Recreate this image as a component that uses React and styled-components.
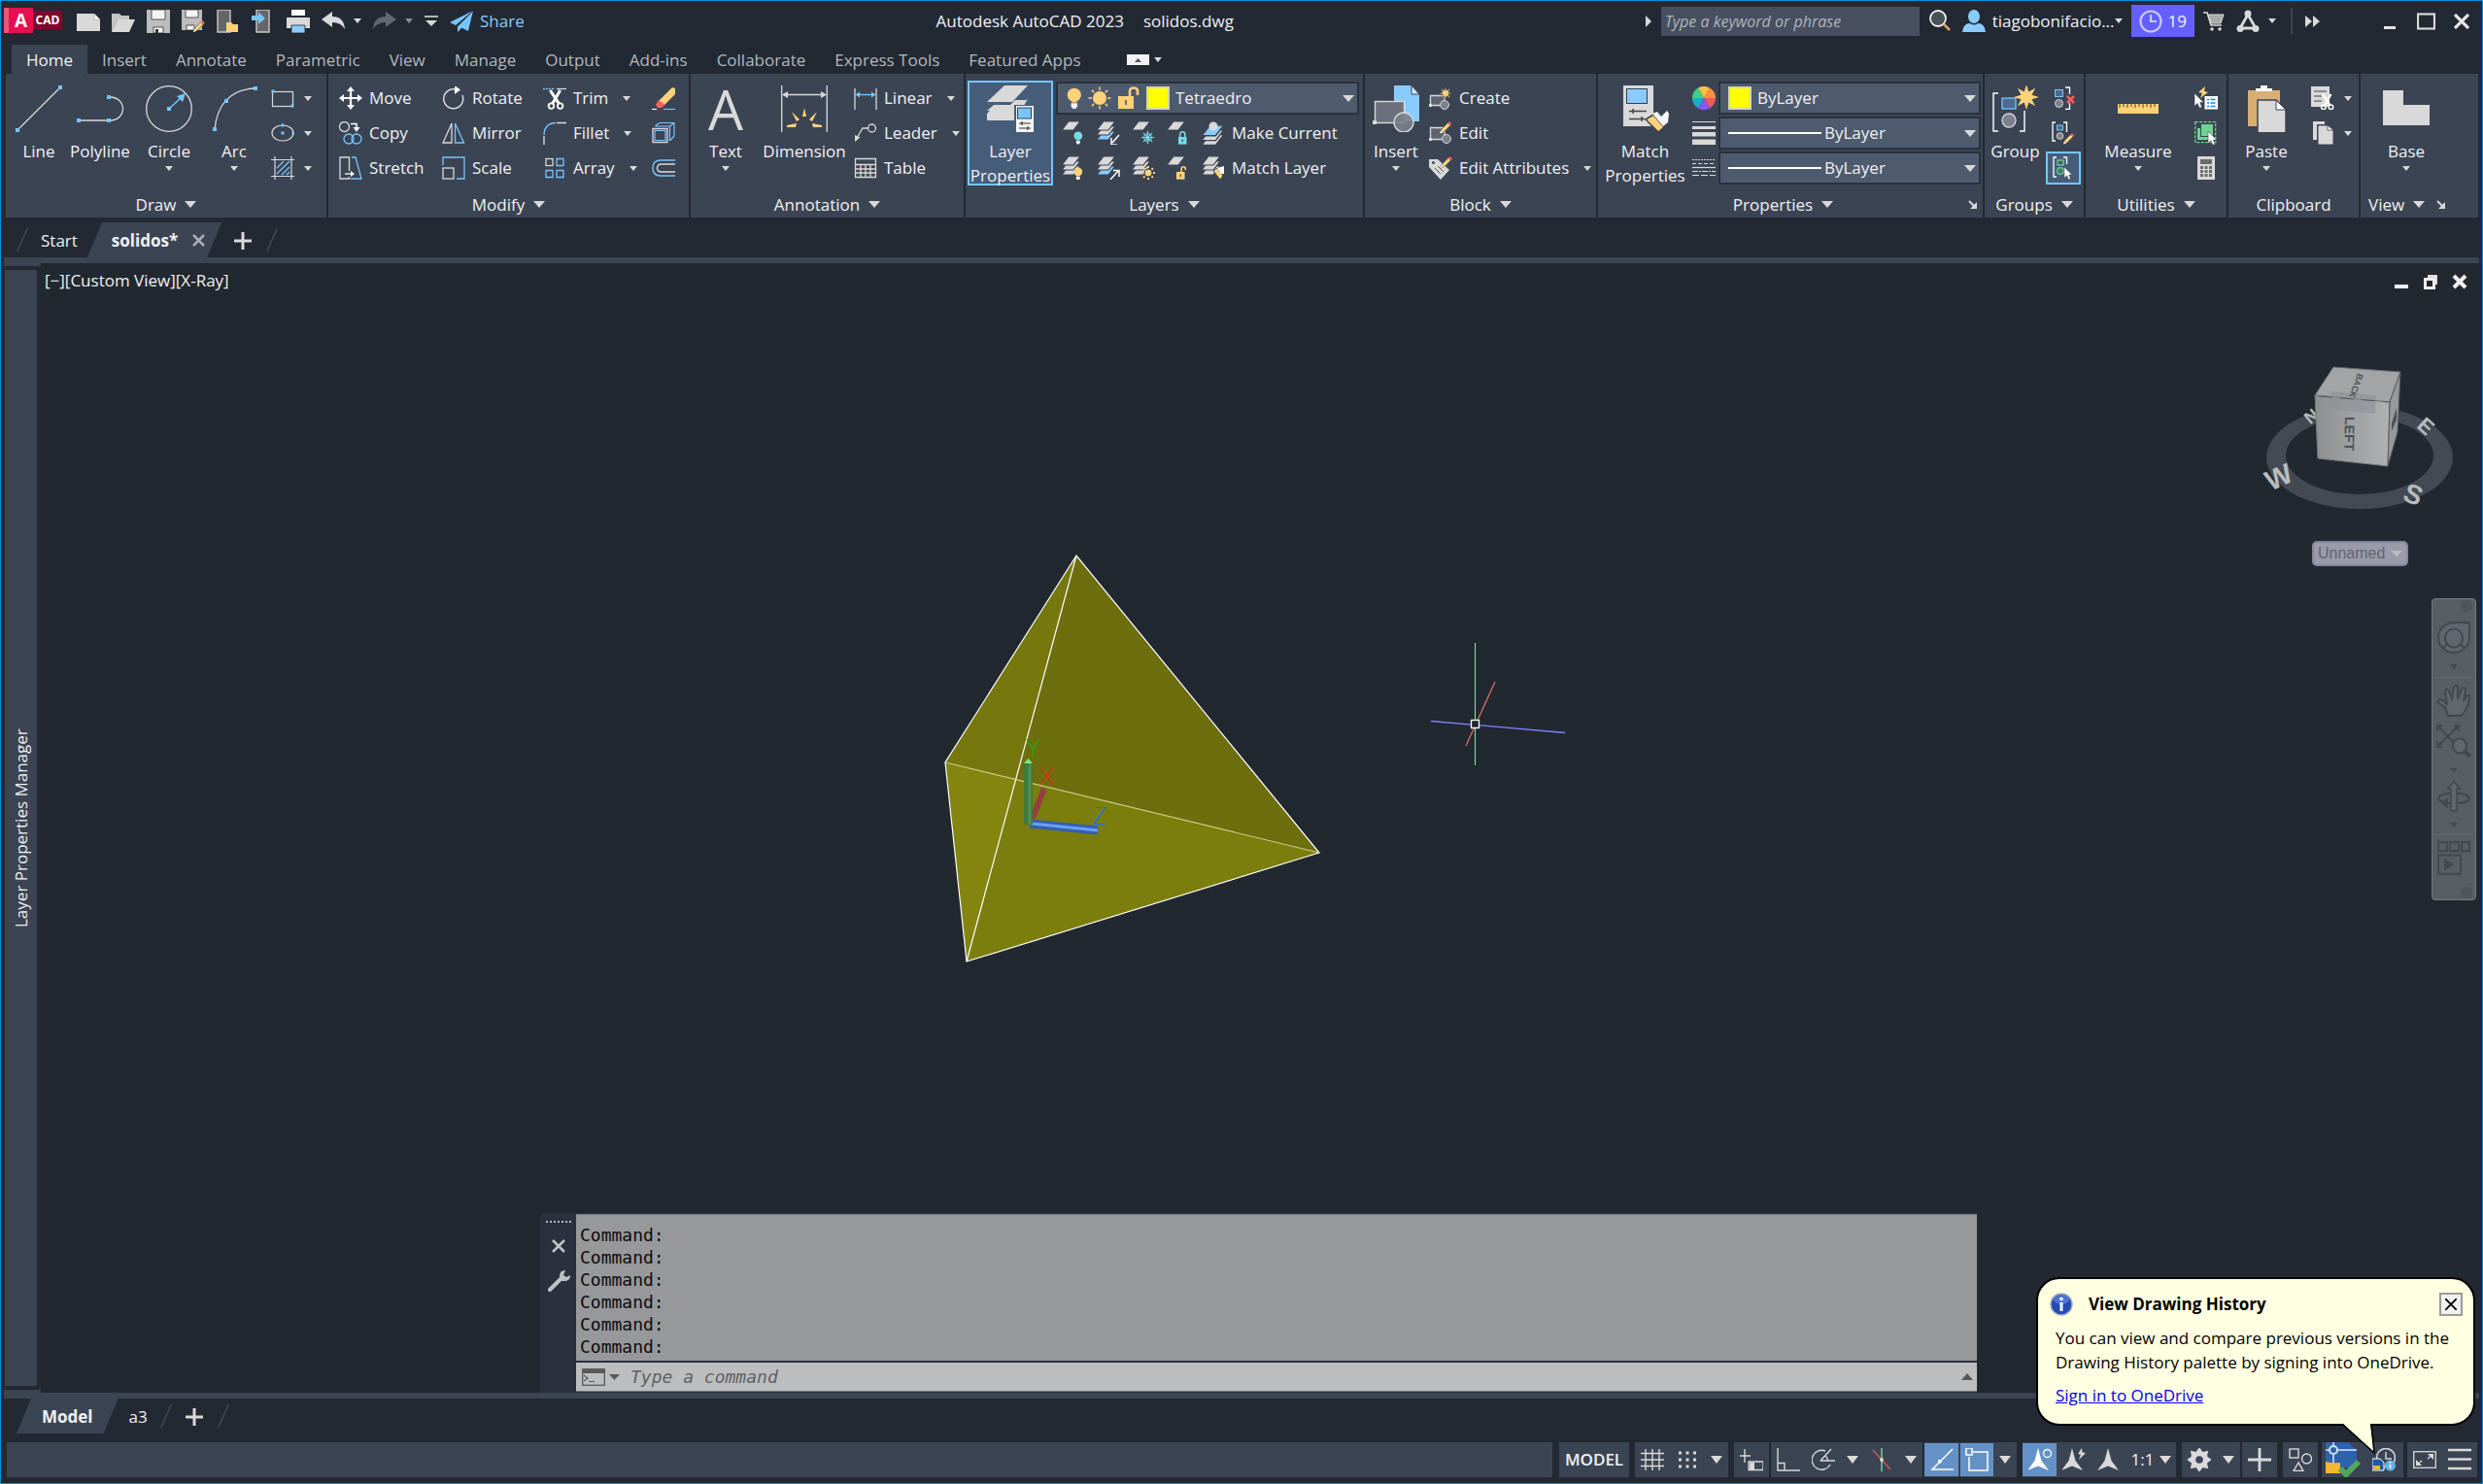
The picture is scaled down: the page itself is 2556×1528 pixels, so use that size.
import React from "react";
import styled, { createGlobalStyle, css } from "styled-components";

const c = {
  bg: "#222933",
  canvas: "#212830",
  panel: "#3b4453",
  field: "#4e5a6e",
  edge: "#2a323e",
  text: "#f0f1f3",
  dim: "#b4b8be",
  grey: "#d9d9d9",
  blue: "#76c5ff",
  sky: "#8acbff",
  gold: "#ffd27a",
  teal: "#76dbe6",
  red: "#f75f5f",
  green: "#6fd391",
  active: "#6592c6",
};
const sans = '"Open Sans", "Noto Sans", sans-serif';
const mono = '"DejaVu Sans Mono", "Liberation Mono", monospace';

const GlobalStyle = createGlobalStyle`
  * { box-sizing: border-box; }
  body { margin: 0; background: ${c.bg}; color: ${c.text}; font: 17px/24px ${sans}; }
  button, select, input { font: inherit; color: inherit; border: 0; background: none; padding: 0; margin: 0; border-radius: 0; }
  button { white-space: nowrap; }
  svg { display: block; flex: none; }
`;

/* ---------- drawing helpers ---------- */

const star = (cx, cy, R, r, n) => {
  let d = "";
  for (let i = 0; i < n * 2; i++) {
    const a = (Math.PI * i) / n - Math.PI / 2;
    const k = i % 2 ? r : R;
    d += `${i ? "L" : "M"}${(cx + k * Math.cos(a)).toFixed(1)} ${(cy + k * Math.sin(a)).toFixed(1)}`;
  }
  return d + "Z";
};

const Svg = ({ s = 24, w = s, h = s, box, children }) => (
  <svg width={w} height={h} viewBox={box || `0 0 ${w} ${h}`} preserveAspectRatio={box ? "none" : undefined} fill="none" aria-hidden="true">
    {children}
  </svg>
);
const Arrow = ({ w = 8, h = 5, fill = c.grey }) => (
  <Svg w={w} h={h}><path d={`M0 0H${w}L${w / 2} ${h}Z`} fill={fill} /></Svg>
);
const Dot = ({ x, y, s = 4 }) => <rect x={x - s / 2} y={y - s / 2} width={s} height={s} fill={c.blue} />;
const Cursor = ({ x, y, k = 1 }) => (
  <path transform={`translate(${x} ${y}) scale(${k})`} d="M0 0V14L3.300 11L5.500 16L8 15L6 10H10Z" fill="#fff" stroke={c.panel} strokeWidth=".6" />
);
const Pencil = ({ x, y, k = 1 }) => (
  <g transform={`translate(${x} ${y}) scale(${k})`}>
    <path d="M0 12L1.500 8L8 1.500L10.500 4L4 10.500Z" fill={c.gold} stroke={c.panel} strokeWidth=".6" />
    <path d="M8 1.500L9.500 0L12 2.500L10.500 4Z" fill={c.red} />
    <path d="M0 12L1 9L3 11Z" fill="#eee" />
  </g>
);
const Sheets = ({ fills, x = 0, y = 0, k = 1, gap = 5 }) => (
  <g transform={`translate(${x} ${y}) scale(${k})`}>
    {fills.map((f, i) => ({ f, i })).reverse().map(({ f, i }) => (
      <path key={i} d={`M7 ${i * gap}H19L12 ${i * gap + 9}H0Z`} fill={f} stroke={c.panel} strokeWidth="1.200" />
    ))}
  </g>
);
const Bulb = ({ x, y, fill, k = 1 }) => (
  <g transform={`translate(${x} ${y}) scale(${k})`}>
    <circle cx="6" cy="6" r="5.500" fill={fill} /><path d="M4 10H8V12H4Z" fill={fill} />
    <path d="M3.500 12.500H8.500V15L7 17H5L3.500 15Z" fill="#f2f2f2" />
  </g>
);
const Lock = ({ x, y, fill, open, k = 1 }) => (
  <g transform={`translate(${x} ${y}) scale(${k})`}>
    <rect x="0" y="7" width="10" height="9" fill={fill} />
    <path d={open ? "M6 7V3.500Q6 1 8.500 1T11 3.500V5" : "M2 7V4Q2 1 5 1T8 4V7"} stroke={fill} strokeWidth="1.800" />
    <path d="M5 10V13" stroke={c.panel} strokeWidth="1.500" />
  </g>
);
const Rays = ({ cx, cy, a, b, n = 8, w = 1.5, color = c.gold }) => (
  <path stroke={color} strokeWidth={w} d={Array.from({ length: n }, (_, i) => {
    const t = (Math.PI * 2 * i) / n;
    return `M${(cx + a * Math.cos(t)).toFixed(1)} ${(cy + a * Math.sin(t)).toFixed(1)}L${(cx + b * Math.cos(t)).toFixed(1)} ${(cy + b * Math.sin(t)).toFixed(1)}`;
  }).join("")} />
);
const Scissors = ({ x, y, k = 1 }) => (
  <g transform={`translate(${x} ${y}) scale(${k})`} stroke="#fff" strokeWidth="2">
    <path d="M2 0L10 12M11 0L4 12" strokeWidth="2.600" />
    <circle cx="3" cy="14" r="2.400" strokeWidth="1.600" /><circle cx="11" cy="14" r="2.400" strokeWidth="1.600" />
  </g>
);
const G = c.grey;

const icons = {
  line: <Svg s={48}><path d="M3 45L45 3" stroke={G} strokeWidth="1.300" /><Dot x={2} y={46} /><Dot x={46} y={2} /></Svg>,
  polyline: <Svg s={48}><path d="M2 36H34M34 12C52 12 52 36 34 36" stroke={G} strokeWidth="1.300" /><Dot x={2} y={36} /><Dot x={33} y={36} /><Dot x={33} y={12} /></Svg>,
  circle: <Svg s={48}><circle cx="24" cy="24" r="23.300" stroke={G} strokeWidth="1.300" /><path d="M24 24L37 12" stroke={c.blue} strokeWidth="1.500" /><path d="M41 8L32 11L38 17Z" fill={c.blue} /><Dot x={24} y={24} /></Svg>,
  arc: <Svg s={48}><path d="M4 46C6 20 20 4 45 3" stroke={G} strokeWidth="1.300" /><Dot x={4} y={45} /><Dot x={16} y={16} /><Dot x={46} y={3} /></Svg>,
  rect: <Svg><rect x="1.500" y="5.500" width="21" height="15" stroke={G} strokeWidth="1.200" /><Dot x={2} y={5} s={3} /><Dot x={22} y={20} s={3} /></Svg>,
  ellipse: <Svg><ellipse cx="12" cy="12" rx="11" ry="8" stroke={G} strokeWidth="1.200" /><Dot x={12} y={12} s={3} /><Dot x={12} y={4} s={3} /><Dot x={23} y={12} s={3} /></Svg>,
  hatch: <Svg><path d="M4 0V24M21 0V24M0 3.500H24M0 20.500H24" stroke={G} strokeWidth="1.200" /><path d="M6 12L13 5M6 18L19 5M11 19L19 11M16 19L19 16" stroke={c.blue} strokeWidth="1.300" /></Svg>,
  move: <Svg><path d="M12 2V22M2 12H22" stroke="#fff" strokeWidth="2.200" /><path d="M12 0L16 5H8ZM12 24L8 19H16ZM0 12L5 8V16ZM24 12L19 16V8Z" fill="#fff" /></Svg>,
  copy: <Svg><circle cx="5.500" cy="5.500" r="5" stroke={G} strokeWidth="1.300" /><path d="M12 2.500H18V7" stroke="#fff" strokeWidth="1.500" /><path d="M14.500 6H21.500L18 11Z" fill="#fff" /><circle cx="10" cy="18" r="5" stroke={c.blue} strokeWidth="1.300" /><circle cx="18" cy="18" r="5" stroke={c.blue} strokeWidth="1.300" /></Svg>,
  stretch: <Svg><path d="M10.500 15V1H1V23H10.500V21" stroke={G} strokeWidth="1.300" /><path d="M13 1H17L23 23H12" stroke={c.blue} strokeWidth="1.300" /><path d="M6 18H12" stroke="#fff" strokeWidth="1.300" /><path d="M12 15L16 18L12 21Z" fill="#fff" /></Svg>,
  rotate: <Svg><path d="M14 3A10 10 0 1 0 21 9" stroke={G} strokeWidth="1.500" /><path d="M13 -1L19 3.500L13 8Z" fill="#fff" /></Svg>,
  mirror: <Svg><path d="M10 2V22H1Z" stroke={G} strokeWidth="1.300" /><path d="M13.500 2V22H22.500Z" stroke={c.blue} strokeWidth="1.300" /></Svg>,
  scale: <Svg><path d="M1 9V1H23V23H15" stroke={c.blue} strokeWidth="1.300" /><rect x="1" y="12" width="11" height="11" stroke={G} strokeWidth="1.300" /></Svg>,
  trim: <Svg><path d="M0 2.500H11" stroke={c.blue} strokeWidth="1.300" strokeDasharray="2 1" /><path d="M14 2.500H24" stroke={G} strokeWidth="1.300" /><Scissors x={5} y={4} k={1.150} /></Svg>,
  fillet: <Svg><path d="M1 14C1 6 6 1.500 13 1.500" stroke={c.blue} strokeWidth="1.400" /><path d="M14 1.500H24M1 15V24" stroke={G} strokeWidth="1.400" /></Svg>,
  array: <Svg><rect x="3" y="2.500" width="7" height="7" stroke={G} strokeWidth="1.300" /><path d="M14 2.500H21V9.500H14ZM3 14.500H10V21.500H3ZM14 14.500H21V21.500H14Z" stroke={c.blue} strokeWidth="1.300" /></Svg>,
  erase: <Svg><path d="M21 1L24 2V8L13 19L7 15Z" fill={c.gold} /><path d="M7 14L14 19L10 22H6L4 19Z" fill={c.red} /><path d="M0 23.500H5" stroke="#fff" strokeWidth="1.200" /><path d="M12 23.500H24" stroke={c.blue} strokeWidth="1.200" /></Svg>,
  cube: <Svg><path d="M1 7.500H16V21.500H1Z" stroke={G} strokeWidth="1.300" /><path d="M3.500 4.500L8 1.500H23V15L18.500 20M3.500 5H18.500V20M18.500 5L23 1.500M3 9.500H14V19.500H3Z" stroke={c.blue} strokeWidth="1.200" /></Svg>,
  offset: <Svg><path d="M24 4H9Q1 4 1 12T9 20H24" stroke={c.blue} strokeWidth="1.400" /><path d="M24 8H10Q5.500 8 5.500 12T10 16H24" stroke={G} strokeWidth="1.400" /></Svg>,
  dimension: <Svg s={48}><path d="M.7 0V48M47.300 0V48" stroke={G} strokeWidth="1.300" /><path d="M3 9.500H45" stroke={G} strokeWidth="1.300" /><path d="M1 9.500L7 6V13ZM47 9.500L41 6V13Z" fill={G} /><path d="M22 32L24 23L26 32ZM19 35L11 27L16 37ZM29 35L37 27L32 37ZM16 39L6 41V43H15ZM32 39L42 41V43H33Z" fill={c.gold} /></Svg>,
  linear: <Svg><path d="M1 2V24M23 2V24" stroke={G} strokeWidth="1.300" /><path d="M3 8.500H21" stroke={c.blue} strokeWidth="1.400" /><path d="M1.500 8.500L6 5.500V11.500ZM22.500 8.500L18 11.500V5.500Z" fill={c.blue} /></Svg>,
  leader: <Svg><circle cx="18.500" cy="7" r="4" stroke={G} strokeWidth="1.300" /><path d="M14 7H9L3 17" stroke={G} strokeWidth="1.300" /><path d="M1 21L1 14L6.500 16.500Z" fill={G} /></Svg>,
  table: <Svg><path d="M1.500 2.500H22.500V21.500H1.500ZM1.500 8.500H22.500M1.500 13H22.500M1.500 17H22.500M7 8.500V21.500M12 8.500V21.500M17 8.500V21.500" stroke={G} strokeWidth="1.300" /></Svg>,
  layerProps: <Svg s={48}><path d="M14 22H28L42 14L29 36H0Z" fill={G} /><path d="M14 12H42L28 26H0Z" fill="#465d7a" /><path d="M13 15H40L28 26H0Z" fill={G} /><path d="M19 0H44L24 20H2Z" fill="#465d7a" /><path d="M18 0H42L26 17H0Z" fill={G} /><path d="M0 29L3 26H30V36H0Z" fill={G} /><rect x="28" y="20" width="22" height="29" fill="#465d7a" /><rect x="30" y="21" width="18" height="27" fill="#f5f5f5" /><rect x="31.500" y="23" width="14" height="11" fill={c.blue} stroke="#31404f" /><path d="M33 39H45M36 37V41M33 44H45M42 42V46" stroke="#333" strokeWidth="1.200" /></Svg>,
  layOff: <Svg><Sheets fills={[G]} /><Bulb x={12} y={10} k={0.8} fill={c.teal} /></Svg>,
  layIso: <Svg><Sheets fills={[G, G, c.sky]} /><path d="M23 14L16 22M15 17V24H21" stroke="#fff" strokeWidth="1.500" /></Svg>,
  layFreeze: <Svg><Sheets fills={[G]} /><circle cx="16.500" cy="16.500" r="4" stroke={c.teal} /><Rays cx={16.5} cy={16.5} a={0} b={6.5} w={1.2} color={c.teal} /></Svg>,
  layLock: <Svg><Sheets fills={[G]} /><Lock x={12} y={10} k={0.85} fill={c.teal} /></Svg>,
  makeCurrent: <Svg><g transform="translate(0 4)"><Sheets fills={[c.sky, G, G]} k={1.2} gap={4} /></g><circle cx="12" cy="5" r="4.500" fill={G} /></Svg>,
  layOn: <Svg><Sheets fills={[G, G, G]} /><Bulb x={12} y={11} k={0.8} fill={c.gold} /></Svg>,
  layUniso: <Svg><Sheets fills={[G, G, c.sky]} /><path d="M14 24L22 15M17 14.500H23V21" stroke="#fff" strokeWidth="1.500" /></Svg>,
  layThaw: <Svg><Sheets fills={[G, G, G]} /><circle cx="17" cy="17" r="4" fill={c.gold} stroke={c.panel} /><Rays cx={17} cy={17} a={5} b={7} w={2} /></Svg>,
  layUnlock: <Svg><Sheets fills={[G]} /><Lock x={10} y={10} k={0.85} fill={c.gold} open /></Svg>,
  matchLayer: <Svg><Sheets fills={[G, G, G]} /><path d="M12 15L16 12L22 20L19 24Z" fill={c.gold} stroke={c.panel} /><path d="M16 12L23 10L23 18L20 18Z" fill="#fff" /></Svg>,
  bulb: <Svg w={16}><Bulb x={0} y={1} k={1.3} fill={c.gold} /></Svg>,
  sun: <Svg><circle cx="12" cy="12" r="7" fill={c.gold} /><Rays cx={12} cy={12} a={8} b={11.5} w={1.5} /></Svg>,
  unlock: <Svg><rect x="1" y="10" width="16" height="13" fill={c.gold} /><path d="M13 10V5Q13 1.500 17 1.500T21 5V9" stroke={c.gold} strokeWidth="2.600" /><path d="M9 14V19" stroke={c.field} strokeWidth="1.600" /></Svg>,
  insert: <Svg s={48}><path d="M22 0H40L48 9V37H22Z" fill={c.sky} /><path d="M40 0L48 9H40Z" fill="#d4ecff" stroke={c.panel} /><rect x="2.500" y="16.500" width="30" height="22" fill="#6b707c" stroke={G} strokeWidth="1.400" /><circle cx="32" cy="38" r="10" fill="#7c818c" fillOpacity=".9" stroke={G} strokeWidth="1.400" /><rect x="0" y="36" width="4" height="4" fill={G} /></Svg>,
  create: <Svg><path d="M1.500 9.500H16V19.500H1.500Z" fill="#5d636f" stroke={G} strokeWidth="1.300" /><path d={star(17, 7, 7, 3, 8)} fill={c.gold} stroke={c.panel} strokeWidth=".6" /><circle cx="16" cy="19" r="4.500" fill="#7c818c" stroke={G} /><rect y="18" width="3" height="3" fill={G} /></Svg>,
  edit: <Svg><path d="M1.500 6.500H16V18.500H1.500Z" fill="#5d636f" stroke={G} strokeWidth="1.300" /><circle cx="18" cy="18" r="4.500" fill="#7c818c" stroke={G} /><Pencil x={11} y={0} k={1.05} /><rect y="17" width="3" height="3" fill={G} /></Svg>,
  editAttr: <Svg><path d="M0 3H9L21 14L12 24L0 11Z" fill={G} /><circle cx="4.500" cy="6.500" r="1.500" fill={c.panel} /><path d="M6 12L12 18M9 10L15 16" stroke="#555" /><Pencil x={12} y={0} k={1} /></Svg>,
  matchProps: <Svg s={48}><rect x="1" y="0" width="31" height="42" fill={G} /><rect x="4.500" y="3.500" width="21" height="15" fill={c.sky} stroke="#31404f" /><path d="M7 26.500H25M11 24V29M7 34.500H23M20 32V37" stroke="#444" strokeWidth="1.500" /><path d="M24 35L32 30L43 43L37 48Z" fill={c.gold} stroke={c.panel} strokeWidth="1.500" /><path d="M31 29L36 27L40 32L46 26L48 29L47 38L42 42Z" fill="#f5f5f5" /></Svg>,
  wheel: <Svg>{["#ffc048", "#ff9040", "#e85a60", "#8658f5", "#18aecb", "#40cf86"].map((f, i) => {
    const p = (k) => `${(12 + 12 * Math.sin((k * Math.PI) / 3)).toFixed(1)} ${(12 - 12 * Math.cos((k * Math.PI) / 3)).toFixed(1)}`;
    return <path key={f} d={`M12 12L${p(i - 0.5)}A12 12 0 0 1 ${p(i + 0.5)}Z`} fill={f} />;
  })}</Svg>,
  weights: <Svg><path d="M0 0H24V1H0ZM0 5H24V8H0ZM0 11H24V15.500H0ZM0 18.500H24V24H0Z" fill={G} /></Svg>,
  dashes: <Svg><g stroke={G} strokeWidth="1.200"><path d="M0 3.500H24" strokeDasharray="2 1" /><path d="M0 7.500H24" strokeDasharray="4 2" /><path d="M0 11.500H24" /><path d="M0 15.500H24" strokeDasharray="6 1 2 1" /><path d="M0 19.500H24" strokeDasharray="7 2" /></g></Svg>,
  group: <Svg s={48}><path d="M6 8H1V47H6M28 47H33V26" stroke="#fff" strokeWidth="1.400" /><rect x="10" y="13" width="14" height="11" fill="#4a6d8f" stroke={c.blue} strokeWidth="1.300" /><circle cx="17" cy="36" r="7" fill="#7c818c" stroke={G} strokeWidth="1.300" /><path d={star(35, 12, 13, 6, 8)} fill={c.gold} /></Svg>,
  ungroup: <Svg><path d="M14 1H18.500V8M18.500 17V23.500H14" stroke="#fff" strokeWidth="1.300" /><rect x="3.500" y="3.500" width="8" height="7" fill="#4a6d8f" stroke={c.blue} /><circle cx="7.500" cy="17.500" r="4" fill="#7c818c" stroke={G} /><path d="M16 10L23 17M23 10L16 17" stroke={c.red} strokeWidth="2.600" /></Svg>,
  groupEdit: <Svg><path d="M4 1H1V20H4M12 1H15.500V11" stroke="#fff" strokeWidth="1.300" /><rect x="5.500" y="4" width="6" height="5" fill="#4a6d8f" stroke={c.blue} /><circle cx="8.500" cy="15" r="3.300" fill="#7c818c" stroke={G} /><Pencil x={12} y={12} k={0.95} /></Svg>,
  groupSel: <Svg><path d="M5 1H2V21H5M12 1H15.500V8" stroke="#fff" strokeWidth="1.300" /><rect x="6" y="4" width="6" height="5" stroke={c.green} strokeWidth="1.300" /><circle cx="9" cy="15" r="3.300" fill="#3f7a64" stroke={c.green} strokeWidth="1.300" /><Cursor x={13} y={11} k={0.8} /></Svg>,
  ruler: <Svg s={48}><rect x="3" y="19" width="42" height="10" fill={c.gold} /><path d="M5 19V23M9 19V22M13 19V23M17 19V22M21 19V23M25 19V22M29 19V23M33 19V22M37 19V23M41 19V22" stroke="#6c5a33" strokeWidth="1.200" /></Svg>,
  quick: <Svg><rect x="10.500" y="10" width="13.500" height="13.500" fill="#fff" /><path d="M13 13.500H15M13 17H15M13 20.500H15M16.500 13.500H21.500M16.500 17H21.500M16.500 20.500H21.500" stroke="#1787e0" strokeWidth="1.400" /><path d="M11 0L4 6L8 7L6 12L14 6L10 5Z" fill={c.gold} /><Cursor x={0} y={7} k={0.95} /></Svg>,
  selAll: <Svg><rect x=".7" y=".7" width="21" height="21" stroke={c.green} strokeWidth="1.300" strokeDasharray="3 1.500" /><path d="M3 7H6V16H14V19H3Z" fill={c.green} /><rect x="7" y="3" width="12" height="12" fill={c.green} /><Cursor x={14} y={10} k={0.9} /></Svg>,
  calc: <Svg><rect x="3" y="0" width="18" height="24" fill={G} /><path d="M6 3H18V8H6ZM6 10H9V13H6ZM10.500 10H13.500V13H10.500ZM15 10H18V13H15ZM6 14H9V17H6ZM10.500 14H13.500V17H10.500ZM15 14H18V17H15ZM6 18H9V21H6ZM10.500 18H13.500V21H10.500ZM15 18H18V21H15Z" fill="#6b6b6b" /></Svg>,
  paste: <Svg s={48}><path d="M5 5H38V42H5Z" fill="#d9ae74" /><path d="M13 6V3H18V0H25V3H30V6Z" fill="#fff" /><path d="M15 15H34L44 25V49H15Z" fill={G} stroke={c.panel} strokeWidth="1.500" /><path d="M34 15V25H44Z" fill="#fff" stroke={c.panel} /></Svg>,
  cut: <Svg><path d="M0 0H19V21H0Z" fill={G} /><path d="M3 5H16M3 10H11M3 15H11" stroke="#444" strokeWidth="1.200" /><Scissors x={10} y={8} k={0.95} /></Svg>,
  copyClip: <Svg><path d="M2 0H14V3H6V19H2Z" fill={G} /><path d="M7 4H17L23 9V24H7Z" fill={G} stroke={c.panel} /><path d="M17 4V9H23Z" fill="#fff" stroke={c.panel} strokeWidth=".8" /></Svg>,
  base: <Svg s={48}><path d="M0 5H21V20H48V41H0Z" fill={G} /></Svg>,

  newFile: <Svg><path d="M0 4H18L24 10V22H0Z" fill={G} /><path d="M18 4V10H24Z" fill="#fff" stroke="#999" strokeWidth=".6" /></Svg>,
  open: <Svg><path d="M0 23V4H8L10 6H18V10H6Z" fill="#c4c4c4" /><path d="M6 10H24L18 23H0Z" fill={G} /></Svg>,
  save: <Svg><path d="M0 0H24V24H0Z" fill="#bdbdbd" /><path d="M5 0H19V10H5ZM7 18H17V24H7Z" fill="#f4f4f4" stroke="#333" strokeWidth=".8" /><path d="M9 20H12V24H9Z" fill="#333" /></Svg>,
  saveAs: <Svg><path d="M0 0H21V21H0Z" fill="#bdbdbd" /><path d="M4 0H17V8H4ZM5 16H13V21H5Z" fill="#f4f4f4" stroke="#333" strokeWidth=".8" /><Pencil x={12} y={11} k={1} /></Svg>,
  openWeb: <Svg><path d="M1 0H14V23H1Z" fill="#666" stroke="#c9c9c9" strokeWidth="1.400" /><path d="M10 13H15L17 15H22V23H10Z" fill={c.gold} /></Svg>,
  saveWeb: <Svg><path d="M5 0H18V23H5Z" fill="#666" stroke="#c9c9c9" strokeWidth="1.400" /><path d="M0 6H7V2L14 9L7 15V11H0Z" fill={c.blue} /></Svg>,
  print: <Svg><path d="M5 0H19V6H5Z" fill="#fff" /><path d="M0 8H24V19H0Z" fill={G} /><path d="M5 16H19V24H5Z" fill={c.sky} stroke="#222" strokeWidth=".8" /></Svg>,
  undo: <Svg><path d="M0 10L11 2V7Q23 7 24 20Q20 13 11 13V18Z" fill={G} /></Svg>,
  redo: <Svg><path d="M24 10L13 2V7Q1 7 0 20Q4 13 13 13V18Z" fill="#626870" /></Svg>,
  custom: <Svg w={14} h={12}><path d="M0 1H14" stroke={G} strokeWidth="1.600" /><path d="M1 5H13L7 11Z" fill={G} /></Svg>,
  plane: <Svg><path d="M24 1L0 13L6 16ZM24 1L9 17L19 22ZM24 1L8 17V23L12 19Z" fill={c.blue} /><path d="M24 1L8 17" stroke={c.bg} /></Svg>,
  search: <Svg><circle cx="10" cy="9" r="8" fill="#4a5058" stroke="#eee" strokeWidth="1.800" /><path d="M16 15L22 21" stroke="#d9a066" strokeWidth="2.600" /></Svg>,
  user: <Svg><ellipse cx="12" cy="7" rx="6" ry="7" fill={c.sky} /><path d="M0 23Q1 14 8 14Q12 17 16 14Q23 14 24 23Z" fill={c.sky} /></Svg>,
  clock: <Svg><circle cx="12" cy="12" r="10.500" stroke="#c9c8ff" strokeWidth="2.200" /><path d="M12 5V12H18" stroke="#c9c8ff" strokeWidth="2.200" /></Svg>,
  cart: <Svg><path d="M0 3H4L8 16H19" stroke={G} strokeWidth="1.500" /><path d="M5 5H21L18 14H8Z" fill="#aaa" stroke={G} /><circle cx="9" cy="20" r="1.800" fill={G} /><circle cx="17" cy="20" r="1.800" fill={G} /></Svg>,
  a360: <Svg><path d="M12 5L4 19H20Z" stroke={G} strokeWidth="2.800" strokeLinejoin="round" /><circle cx="12" cy="4" r="3.500" fill={G} /><circle cx="4" cy="19.500" r="3.500" fill={G} /><circle cx="20" cy="19.500" r="3.500" fill={G} /></Svg>,
  more: <Svg w={16} h={12}><path d="M0 0L7 6L0 12ZM8 0L15 6L8 12Z" fill={G} /></Svg>,

  grid: <Svg><path d="M5 1V23M12 1V23M19 1V23M0 5.500H24M0 12H24M0 18.500H24" stroke={G} strokeWidth="1.400" /></Svg>,
  dots: <Svg><path d="M3 5H21M3 12H21M3 19H21" stroke={G} strokeWidth="3" strokeDasharray="3 4.500" /></Svg>,
  dyn: <Svg><path d="M5 1V15M0 8H11" stroke={G} strokeWidth="1.400" /><path d="M9 14H24V22.500H9Z" fill={c.panel} stroke={G} strokeWidth="1.300" /><path d="M10 15H15V22H10Z" fill={G} /></Svg>,
  ortho: <Svg><path d="M1 0V23H24M1 15.500H8V23" stroke={G} strokeWidth="1.400" /></Svg>,
  polar: <Svg><path d="M14 3A10 10 0 1 0 19 17M9 13H24M9 13L20 1M14 8Q17 10 16 13" stroke={G} strokeWidth="1.400" /></Svg>,
  iso: <Svg><path d="M12 0V24" stroke={c.green} strokeWidth="1.500" /><path d="M3 2L21 22" stroke="#d9535b" strokeWidth="1.400" /><rect x="10.500" y="10.500" width="3" height="3" fill="#fff" /></Svg>,
  track: <Svg><path d="M23 1L2 22H24" stroke="#fff" strokeWidth="1.500" /><rect x="8" y="12" width="3.500" height="3.500" fill="#fff" /></Svg>,
  osnap: <Svg><path d="M8 4H23V23H4V9" stroke="#fff" strokeWidth="1.500" /><path d="M1 0H7V7H1Z" stroke="#fff" strokeWidth="1.500" /></Svg>,
  annoVis: <Svg><path d="M10 0L13.500 13L21 23L10 18.500L-1 23L6.500 13Z" fill="#fff" /><circle cx="19.500" cy="5.500" r="4" stroke="#fff" strokeWidth="1.300" /></Svg>,
  annoAuto: <Svg><path d="M10 0L13.500 13L21 23L10 18.500L-1 23L6.500 13Z" fill={G} /><path d="M20 0L16 6L19 6.500L17 12L24 5L20.500 4.500Z" fill={G} /></Svg>,
  anno: <Svg><path d="M11 0L14.500 13L22 23L11 18.500L0 23L7.500 13Z" fill={G} /></Svg>,
  gear: <Svg><path d={star(12, 12, 13, 8.5, 8)} fill={G} /><circle cx="12" cy="12" r="9" fill={G} /><circle cx="12" cy="12" r="3.800" fill={c.panel} /></Svg>,
  plus: <Svg><path d="M12 0V24M0 12H24" stroke={G} strokeWidth="2.800" /></Svg>,
  shapes: <Svg><rect x="1" y="1" width="9" height="9" stroke={G} strokeWidth="1.400" /><circle cx="18.500" cy="11" r="5" stroke={G} strokeWidth="1.400" /><path d="M10 15L5 23.500H15Z" stroke={G} strokeWidth="1.400" /></Svg>,
  sheetSet: <Svg w={36} h={36}><path d="M0 0H24L32 9V26H0Z" fill="#2d62ad" /><path d="M8 0V22M0 8H32" stroke="#a9c9ee" strokeWidth="2" /><circle cx="8" cy="8" r="4" fill="#2d62ad" stroke="#cfe3fa" strokeWidth="2" /><path d="M0 20Q8 22 15 21V32H0Z" fill="#f5b72e" /><path d="M15 27L21 33L34 20" stroke="#4fa85a" strokeWidth="6" /></Svg>,
  history: <Svg><circle cx="14" cy="10" r="9.500" stroke={G} strokeWidth="1.600" /><path d="M14 4V11H20" stroke={G} strokeWidth="1.400" /><path d="M0 11H8L12 15V23H0Z" fill="#2057a5" stroke="#fff" /><path d="M1 18H8V22H1Z" fill="#f5b72e" /><circle cx="18.500" cy="18" r="5.500" fill="#62b0ea" /><path d="M18.500 17V21M18.500 14V15.500" stroke="#fff" strokeWidth="1.600" /></Svg>,
  clean: <Svg><rect x=".7" y="3.700" width="22.600" height="16.600" stroke={G} strokeWidth="1.300" /><path d="M3 12V18H9ZM21 12V6H15Z" fill={G} /><path d="M4 17L9 13M20 7L15 11" stroke={G} strokeWidth="1.300" /></Svg>,
  menu: <Svg><path d="M0 2H24M0 11.500H24M0 21H24" stroke={G} strokeWidth="2.600" /></Svg>,
};

/* ---------- shell ---------- */

const Shell = styled.div`
  position: relative; display: flex; flex-direction: column; min-height: 100vh;
  border: 1px solid #0091dc; background: ${c.bg}; overflow: hidden;
`;
const Row = styled.div`display: flex; align-items: center; gap: ${(p) => p.$gap || 0}px; padding-left: ${(p) => p.$pad || 0}px;`;
const Grow = styled.div`flex: 1;`;

const IconButton = styled.button`
  display: flex; align-items: center; justify-content: center; flex: none;
  width: ${(p) => p.$w || 24}px; height: ${(p) => p.$h || 24}px;
`;

/* title bar */
const TitleBar = styled.header`display: flex; align-items: center; justify-content: space-between; height: 45px; padding: 0 12px 4px 3px;`;
const TitleSide = styled.div`display: flex; align-items: center; flex: none;`;
const Logo = styled.button`display: flex; align-items: flex-start; height: 28px; margin-right: 15px;`;
const LogoA = styled.span`
  width: 30px; height: 26px; background: #e51050; border-left: 5px solid #f0527f;
  color: #fff; font: 700 19px/26px ${sans};
`;
const LogoCad = styled.span`
  width: 30px; height: 19px; margin-top: 3px; background: #7c0a2c; color: #fff; font: 700 12px/19px ${sans};
`;
const Quick = styled.div`display: flex; align-items: center; gap: 12px;`;
const QuickPair = styled.div`display: flex; align-items: center; gap: 9px;`;
const Share = styled.button`display: flex; align-items: center; gap: 7px; color: ${c.sky}; margin-left: 12px;`;
const AppTitle = styled.h1`display: flex; gap: 20px; margin: 0; font: 400 17px/24px ${sans};`;
const SearchBox = styled.input`
  width: 266px; height: 30px; margin: 0 9px 0 10px; padding: 0 4px; background: #474f60; font-style: italic; font-size: 16px;
  &::placeholder { color: #b0b4bc; opacity: 1; }
`;
const Account = styled.button`display: flex; align-items: center; gap: 7px; margin-left: 11px;`;
const Trial = styled.button`
  display: flex; align-items: center; gap: 6px; height: 33px; padding: 0 8px 0 8px; margin: 0 9px; background: #6360ff;
`;
const Rule = styled.div`width: 2px; height: 27px; background: ${c.panel}; margin: 0 13px 0 15px;`;
const WindowButtons = styled.div`display: flex; gap: 18px; margin-left: 62px;`;

/* ribbon tabs */
const Tabs = styled.nav`display: flex; align-items: stretch; height: 30px; padding-left: 11px;`;
const Tab = styled.button`
  padding: 1px 15px 0; color: ${(p) => (p.$on ? c.text : c.dim)};
  background: ${(p) => (p.$on ? c.panel : "none")};
`;
const TabToggle = styled.button`display: flex; align-items: center; gap: 5px; margin-left: 32px;`;

/* ribbon */
const Ribbon = styled.section`display: flex; height: 148px; margin: 0 4px 0 5px; background: ${c.panel};`;
const Panel = styled.div`
  display: flex; flex-direction: column; width: ${(p) => p.$w}px; flex: ${(p) => (p.$w ? "none" : "1")};
  border-right: ${(p) => (p.$w ? `2px solid ${c.bg}` : "0")};
`;
const PanelBody = styled.div`display: flex; align-items: flex-start; height: 121px; padding: 7px 0 0 ${(p) => p.$pad || 0}px;`;
const PanelFoot = styled.div`display: flex; align-items: center; height: 27px;`;
const PanelTitle = styled.button`
  display: flex; align-items: center; justify-content: center; gap: 9px;
  flex: ${(p) => (p.$start ? "none" : "1")}; padding: ${(p) => (p.$start ? "0 12px 0 8px" : "0")};
`;
const Launcher = styled.button`width: 10px; height: 10px; margin-right: 5px;`;

const Big = styled.button`
  display: flex; flex-direction: column; align-items: center; width: ${(p) => p.$w}px; height: 108px; padding-top: 5px;
  line-height: 25px; white-space: normal;
  ${(p) => p.$on && css`background: #465d7a; box-shadow: inset 0 0 0 2px ${c.blue};`}
  & > span { margin-top: 7px; }
  & > span + svg { margin-top: 3px; }
`;
const TextGlyph = styled.b`height: 48px; overflow: hidden; font: 400 57px/48px ${sans}; color: ${c.grey};`;
const Col = styled.div`display: flex; flex-direction: column; flex: none; width: ${(p) => (p.$w ? `${p.$w}px` : "auto")}; margin-left: ${(p) => p.$ml || 0}px;`;
const Tool = styled.button`
  display: flex; align-items: center; height: 36px; gap: 7px;
  & > span + svg { margin-left: 8px; }
  & > svg + svg { margin-left: 3px; }
`;
const SideTool = styled(IconButton)`
  height: ${(p) => (p.$on ? 34 : 36)}px; margin-top: ${(p) => (p.$on ? 1 : 0)}px;
  ${(p) => p.$on && css`background: #465d7a; box-shadow: inset 0 0 0 2px ${c.blue};`}
`;
const Combo = styled.label`
  position: relative; display: flex; align-items: center; width: ${(p) => p.$w}px; height: 34px; margin: 1px 0;
  padding: 0 3px 0 ${(p) => p.$pad || 9}px; gap: ${(p) => p.$gap || 6}px; background: ${c.field}; border: 2px solid ${c.edge};
`;
const Pick = styled.select`appearance: none; flex: 1; min-width: 0; height: 28px; outline: 0; option { color: #000; }`;
const Swatch = styled.span`width: ${(p) => p.$w || 24}px; height: ${(p) => p.$w || 24}px; flex: none; background: #ffff00; border: 2px solid #d4d4b0;`;
const Sample = styled.span`width: 96px; height: 2px; flex: none; background: #fff;`;

function RibbonPanel({ w, pad, title, launcher, start, plain, children }) {
  return (
    <Panel $w={w}>
      <PanelBody $pad={pad}>{children}</PanelBody>
      <PanelFoot>
        <PanelTitle $start={start}>{title}{!plain && <Arrow w={12} h={7} />}</PanelTitle>
        {launcher && <Launcher aria-label={`${title} settings`}><Svg s={10}><path d="M1 1L7 7" stroke={G} strokeWidth="2" /><path d="M9 2V9H2Z" fill={G} /></Svg></Launcher>}
      </PanelFoot>
    </Panel>
  );
}
const BigTool = ({ w, icon, label, arrow, on }) => (
  <Big $w={w} $on={on}>{typeof icon === "string" ? icons[icon] : icon}<span>{label}</span>{arrow && <Arrow />}</Big>
);
const SmallTool = ({ icon, label, arrow }) => (
  <Tool aria-label={label || icon}>{icons[icon]}{label && <span>{label}</span>}{arrow && <Arrow />}</Tool>
);
const ToolCol = ({ w, ml, items }) => (
  <Col $w={w} $ml={ml}>{items.map(([icon, label, arrow]) => <SmallTool key={icon} icon={icon} label={label} arrow={arrow} />)}</Col>
);

/* document tabs */
const DocTabs = styled.nav`display: flex; align-items: flex-end; height: 41px; padding-left: 16px;`;
const Slash = styled.i`width: 2px; height: 24px; margin: 6px 5px; background: ${c.panel}; transform: skewX(-24deg); align-self: flex-end;`;
const DocTab = styled.button`
  display: flex; align-items: center; height: 36px; gap: 15px; padding: 1px ${(p) => p.$pr || 0}px 0 ${(p) => p.$pl || 0}px;
  ${(p) => p.$on && css`
    font-weight: 700; background: ${c.panel}; clip-path: polygon(15px 0, 100% 0, calc(100% - 15px) 100%, 0 100%);
  `}
`;
const Strip = styled.div`height: 6px; margin: 0 3px; background: ${c.panel};`;

/* workspace */
const Work = styled.main`display: flex; flex: 1; min-height: 700px;`;
const Dock = styled.aside`display: flex; flex-direction: column; gap: 4px; width: 41px; padding-left: 3px;`;
const DockEdge = styled.div`height: 3px; background: ${c.panel};`;
const DockBar = styled.button`
  flex: 1; width: 33px; margin-left: 1px; background: ${c.panel}; writing-mode: vertical-rl; transform: rotate(180deg);
`;
const Canvas = styled.section`position: relative; flex: 1; background: ${c.canvas};`;
const ViewLabel = styled.div`display: flex; padding: 6px 0 0 4px; font-size: 17px;`;
const Pinned = styled.div`
  position: absolute; top: ${(p) => p.$top}px; left: ${(p) => (p.$left !== undefined ? `${p.$left}px` : "auto")};
  right: ${(p) => (p.$right !== undefined ? `${p.$right}px` : "auto")};
`;
const ViewName = styled.select`
  appearance: none; width: 99px; height: 26px; padding: 0 4px; border: 2px solid #85869a; border-radius: 5px; background: #999bab;
  color: #62656d; font: 16px/20px "Liberation Sans", sans-serif; outline: 0;
`;
const NavBar = styled.nav`
  display: flex; flex-direction: column; align-items: center; width: 46px; height: 311px; background: #595e62;
  border: 1px solid #767b7f; border-radius: 4px;
`;

const Command = styled.section`
  position: absolute; left: 514px; right: 520px; bottom: 0; display: flex; height: 185px; background: #2a303e; border-radius: 4px 0 0 0;
`;
const Grip = styled.div`display: flex; flex-direction: column; align-items: center; gap: 12px; width: 37px; padding-top: 8px;`;
const Dotted = styled.div`width: 26px; border-top: 2px dotted ${c.dim};`;
const CommandMain = styled.div`display: flex; flex-direction: column; flex: 1; margin: 1px 0; gap: 2px; font: 18px/23px ${mono};`;
const History = styled.ol`
  flex: 1; margin: 0; padding: 9px 4px 0; list-style: none; background: #97989a; color: #0c0d0f; border-top: 1px solid #747b88;
`;
const Prompt = styled.label`display: flex; align-items: center; height: 30px; padding: 0 4px 0 6px; gap: 4px; background: #bcbdbf; border-bottom: 1px solid #777;`;
const PromptInput = styled.input`
  flex: 1; margin-left: 7px; outline: 0; color: #222; font-style: italic;
  &::placeholder { color: #606163; opacity: 1; }
`;

/* bottom */
const LayoutTabs = styled(DocTabs)`height: 36px;`;
const Status = styled.footer`display: flex; align-items: stretch; height: 36px; margin: 9px 5px 6px 6px;`;
const StatusFill = styled.div`flex: 1; background: ${c.panel}; margin-right: 7px;`;
const StatusGroup = styled.div`
  display: flex; align-items: center; background: ${c.panel}; margin-right: ${(p) => (p.$mr === undefined ? 6 : p.$mr)}px;
`;
const StatusButton = styled(IconButton)`
  width: ${(p) => p.$w || 36}px; height: 36px; font-weight: ${(p) => (p.$strong ? 600 : 400)};
  ${(p) => p.$on && css`height: 34px; background: ${c.active};`}
`;
const StatusRule = styled.span`width: 2px; height: 36px; background: ${c.panel};`;

const Balloon = styled.aside`
  position: absolute; right: 7px; bottom: 59px; width: 452px; height: 153px; padding: 14px 11px 0 18px;
  background: #ffffe1; border: 2px solid #000; border-radius: 24px; color: #000;
`;
const BalloonHead = styled.div`display: flex; align-items: center; gap: 16px; margin-left: -6px;`;
const BalloonTitle = styled.h2`flex: 1; margin: 0; font: 700 17px/24px ${sans};`;
const BalloonClose = styled.button`width: 24px; height: 24px; border: 2px solid #9a9a9a; background: #f0f0f0; padding: 4px;`;
const BalloonText = styled.p`margin: 10px 0; line-height: 25px; white-space: nowrap;`;
const Tail = styled.div`position: absolute; left: 314px; top: 149px;`;
const Anchor = styled.a`color: #0000ee;`;

const n1 = "#444950";
const navIcons = {
  wheel: <Svg w={34} h={34} box="0 0 34 32"><path d="M17 1H31Q33 1 33 3V16A16 14.500 0 1 1 17 1Z" fill="#62666e" stroke={n1} strokeWidth="2" /><circle cx="17" cy="16" r="9" stroke={n1} strokeWidth="2" /><path d="M10 22L5 26M24 22L28 26" stroke={n1} strokeWidth="2" /></Svg>,
  hand: <Svg w={34} h={35} box="0 0 34 32"><path d="M11 30L8 22L1 18Q0 14 4 15L10 19L8 8Q9 3 12 7L15 14L17 3Q19 0 21 3V14L25 5Q28 2 29 6L27 16L31 11Q34 10 33 14Q31 24 25 30Z" fill="#62666e" stroke={n1} strokeWidth="2" /></Svg>,
  zoom: <Svg w={36} h={35} box="0 0 36 32"><path d="M2 2L21 20M22 2L2 20" stroke={n1} strokeWidth="2" /><path d="M0 0H7L0 7ZM24 0H17L24 7ZM0 22V15L7 22Z" fill={n1} /><circle cx="24" cy="20" r="7" fill="#62666e" stroke={n1} strokeWidth="2" /><path d="M29 25L35 30" stroke={n1} strokeWidth="4" /></Svg>,
  orbit: <Svg w={34} h={34} box="0 0 34 30"><path d="M11 21Q1 20 1 17Q2 12 17 12T33 17Q32 21 20 21H9" stroke={n1} strokeWidth="2" /><path d="M4 21L11 16V26Z" fill={n1} /><path d="M14 28V8H11L17 1L23 8H20V28Z" fill="#62666e" stroke={n1} strokeWidth="1.500" /></Svg>,
  motion: <Svg w={34} h={36} box="0 0 34 32"><path d="M1 1H10V9H1ZM13 1H22V9H13ZM25 1H33V9H25ZM1 13H24V30H1Z" stroke={n1} strokeWidth="2" /><path d="M7 16L17 21.500L7 27Z" fill={n1} /></Svg>,
};
const NavItem = styled.button`height: ${(p) => p.$h}px; display: flex; flex-direction: column; align-items: center; justify-content: flex-start; gap: 10px; margin-top: ${(p) => p.$mt || 0}px;`;
const NavRule = styled.div`width: 40px; height: 1px; background: #666b70;`;
const NavEnd = styled.button`align-self: flex-end; margin: 1px 3px; height: 12px; width: 12px; border-radius: 6px; background: #50555a;`;

function Model() {
  return (
    <svg width="700" height="460" viewBox="940 550 700 460" fill="none" role="img" aria-label="Tetrahedron">
      <path d="M1108 572L973 785L1046 802Z" fill="#76770d" />
      <path d="M1108 572L1046 802L1358 878Z" fill="#6d6e0d" />
      <path d="M973 785L1046 802L995 990Z" fill="#84850e" />
      <path d="M1046 802L1358 878L995 990Z" fill="#7b7d0c" />
      <path d="M973 785L1358 878" stroke="#cfcf86" strokeWidth="1.200" />
      <path d="M1108 572L973 785L995 990L1358 878ZL995 990" stroke="#fff" strokeWidth="1.200" />
      <path d="M1062 844L1075 812" stroke="#944040" strokeWidth="6" />
      <path d="M1060 848L1130 855" stroke="#3460ad" strokeWidth="9" /><path d="M1062 848L1130 855" stroke="#6aa0f5" strokeWidth="3" />
      <path d="M1058.500 785V849" stroke="#3f7a3c" strokeWidth="9" /><path d="M1060 785V849" stroke="#4f9150" strokeWidth="3" />
      <path d="M1054 786L1058.500 781L1063 786Z" fill="#80e880" />
      <g fontFamily="Lato, sans-serif" fontWeight="300" fontSize="25">
        <text x="1056" y="779" fill="#12b012">Y</text><text x="1070" y="808" fill="#e02a20">X</text><text x="1124" y="849" fill="#1470ff">Z</text>
      </g>
      <path d="M1518.500 662V788" stroke="#86f286" />
      <path d="M1473 742.500L1611 754.500" stroke="#8080ff" strokeWidth="1.300" /><path d="M1539 702L1509 768" stroke="#e87070" strokeWidth="1.200" />
      <rect x="1514.500" y="741.500" width="8" height="8" fill={c.canvas} stroke="#fff" strokeWidth="1.300" />
    </svg>
  );
}

function ViewCube() {
  return (
    <svg width="230" height="170" viewBox="2320 360 230 170" fill="none" role="img" aria-label="View cube">
      <defs><linearGradient id="face" x1="0" x2="1"><stop offset="0" stopColor="#8e8f90" /><stop offset="1" stopColor="#afb1b3" /></linearGradient></defs>
      <path fillRule="evenodd" fill="#434a53" d="M2333 471A96 53 0 1 0 2525 471A96 53 0 1 0 2333 471ZM2353 469A76 40 0 1 1 2505 469A76 40 0 1 1 2353 469Z" />
      <g fontFamily="Liberation Sans, sans-serif" fontWeight="700" fill="#b9bbbd">
        <text x="2332" y="501" fontSize="29" transform="rotate(-24 2346 491)">W</text>
        <text x="2475" y="519" fontSize="28" transform="rotate(22 2485 509)">S</text>
        <text x="2490" y="447" fontSize="22" transform="rotate(42 2498 439)">E</text>
        <text x="2373" y="435" fontSize="18" transform="rotate(-40 2379 429)">N</text>
      </g>
      <path d="M2383 407L2402 378L2471 383L2460 414Z" fill="#a2a4a5" stroke="#6f7173" />
      <path d="M2383 407L2460 414L2458 480L2386 472Z" fill="url(#face)" stroke="#77797b" />
      <path d="M2460 414L2471 383L2468 445L2458 480Z" fill="#96989a" stroke="#55585b" />
      <path d="M2399 403L2446 407L2445 426L2397 421Z" fill="#8c9096" fillOpacity=".55" />
      <path d="M2387 408L2460 414" stroke="#55585b" strokeDasharray="14 8" />
      <g fontFamily="Liberation Sans Narrow, Liberation Sans, sans-serif" fontWeight="700" fill="#4b5158">
        <text x="2414" y="429" fontSize="14" transform="rotate(91 2414 429)">LEFT</text>
        <text x="2427" y="384" fontSize="9" transform="rotate(110 2427 384)">BACK</text>
      </g>
      <path d="M2462 436L2467 420V432L2462 444Z" fill="#4b5158" />
    </svg>
  );
}

const tabs = ["Home", "Insert", "Annotate", "Parametric", "View", "Manage", "Output", "Add-ins", "Collaborate", "Express Tools", "Featured Apps"];

export default function App() {
  return (
    <Shell>
      <GlobalStyle />
      <TitleBar>
        <TitleSide>
          <Logo aria-label="Application menu"><LogoA>A</LogoA><LogoCad>CAD</LogoCad></Logo>
          <Quick>
            {["newFile", "open", "save", "saveAs", "openWeb", "saveWeb", "print"].map((k) => <IconButton key={k} aria-label={k}>{icons[k]}</IconButton>)}
            <QuickPair><IconButton aria-label="Undo">{icons.undo}</IconButton><Arrow /></QuickPair>
            <QuickPair><IconButton aria-label="Redo">{icons.redo}</IconButton><Arrow fill="#8a8f96" /></QuickPair>
            <IconButton $w={14} aria-label="Customize">{icons.custom}</IconButton>
          </Quick>
          <Share>{icons.plane}Share</Share>
        </TitleSide>
        <AppTitle><span>Autodesk AutoCAD 2023</span><span>solidos.dwg</span></AppTitle>
        <TitleSide>
          <Svg w={6} h={12}><path d="M0 0L6 6L0 12Z" fill={G} /></Svg>
          <SearchBox aria-label="Search" placeholder="Type a keyword or phrase" />
          <IconButton aria-label="Search">{icons.search}</IconButton>
          <Account>{icons.user}<Row>tiagobonifacio...<Arrow /></Row></Account>
          <Trial>{icons.clock}19</Trial>
          <Row $gap={10}>
            <IconButton aria-label="Store">{icons.cart}</IconButton>
            <QuickPair><IconButton aria-label="Autodesk apps">{icons.a360}</IconButton><Arrow /></QuickPair>
          </Row>
          <Rule />
          <IconButton $w={16} aria-label="More">{icons.more}</IconButton>
          <WindowButtons>
            <IconButton $w={18} aria-label="Minimize"><Svg w={12} h={18}><path d="M0 15.500H12" stroke="#e6e6e6" strokeWidth="3" /></Svg></IconButton>
            <IconButton $w={20} aria-label="Maximize"><Svg w={19} h={18}><rect x="1" y="1.500" width="17" height="15" stroke={G} strokeWidth="2.200" /></Svg></IconButton>
            <IconButton $w={18} aria-label="Close"><Svg w={16} h={16}><path d="M1 1L15 15M15 1L1 15" stroke="#e6e6e6" strokeWidth="3.200" /></Svg></IconButton>
          </WindowButtons>
        </TitleSide>
      </TitleBar>

      <Tabs>
        {tabs.map((t, i) => <Tab key={t} $on={i === 0}>{t}</Tab>)}
        <TabToggle aria-label="Minimize ribbon">
          <Svg w={23} h={11}><rect width="23" height="11" fill="#f2f2f2" /><path d="M8 8L11.500 4L15 8Z" fill="#555" /></Svg><Arrow />
        </TabToggle>
      </Tabs>

      <Ribbon>
        <RibbonPanel w={332} pad={7} title="Draw">
          <BigTool w={54} icon="line" label="Line" />
          <BigTool w={72} icon="polyline" label="Polyline" />
          <BigTool w={70} icon="circle" label="Circle" arrow />
          <BigTool w={64} icon="arc" label="Arc" arrow />
          <ToolCol ml={6} items={[["rect", "", 1], ["ellipse", "", 1], ["hatch", "", 1]]} />
        </RibbonPanel>
        <RibbonPanel w={373} pad={11} title="Modify">
          <ToolCol w={106} items={[["move", "Move"], ["copy", "Copy"], ["stretch", "Stretch"]]} />
          <ToolCol w={104} items={[["rotate", "Rotate"], ["mirror", "Mirror"], ["scale", "Scale"]]} />
          <ToolCol w={112} items={[["trim", "Trim", 1], ["fillet", "Fillet", 1], ["array", "Array", 1]]} />
          <ToolCol items={[["erase"], ["cube"], ["offset"]]} />
        </RibbonPanel>
        <RibbonPanel w={283} title="Annotation">
          <BigTool w={72} icon={<TextGlyph aria-hidden="true">A</TextGlyph>} label="Text" arrow />
          <BigTool w={90} icon="dimension" label="Dimension" />
          <ToolCol ml={6} items={[["linear", "Linear", 1], ["leader", "Leader", 1], ["table", "Table"]]} />
        </RibbonPanel>
        <RibbonPanel w={411} pad={2} title="Layers">
          <BigTool w={88} icon="layerProps" label="Layer Properties" on />
          <Col $ml={3}>
            <Combo $w={312}>
              {icons.bulb}{icons.sun}{icons.unlock}<Swatch />
              <Pick aria-label="Layer" defaultValue="Tetraedro"><option>Tetraedro</option></Pick><Arrow w={12} h={7} />
            </Combo>
            {[["layOff", "layIso", "layFreeze", "layLock", "makeCurrent", "Make Current"], ["layOn", "layUniso", "layThaw", "layUnlock", "matchLayer", "Match Layer"]].map((r) => (
              <Row key={r[5]} $gap={12} $pad={6}>
                {r.slice(0, 4).map((k) => <IconButton key={k} aria-label={k}>{icons[k]}</IconButton>)}
                <SmallTool icon={r[4]} label={r[5]} />
              </Row>
            ))}
          </Col>
        </RibbonPanel>
        <RibbonPanel w={240} title="Block">
          <BigTool w={64} icon="insert" label="Insert" arrow />
          <ToolCol ml={2} items={[["create", "Create"], ["edit", "Edit"], ["editAttr", "Edit Attributes", 1]]} />
        </RibbonPanel>
        <RibbonPanel w={398} title="Properties" launcher>
          <BigTool w={97} icon="matchProps" label="Match Properties" />
          <ToolCol w={27} items={[["wheel"], ["weights"], ["dashes"]]} />
          <Col>
            <Combo $w={270} $pad={8}><Swatch /><Pick aria-label="Object color" defaultValue="ByLayer"><option>ByLayer</option></Pick><Arrow w={12} h={7} /></Combo>
            <Combo $w={270} $pad={8} $gap={3}><Sample /><Pick aria-label="Lineweight" defaultValue="ByLayer"><option>ByLayer</option></Pick><Arrow w={12} h={7} /></Combo>
            <Combo $w={270} $pad={8} $gap={3}><Sample /><Pick aria-label="Linetype" defaultValue="ByLayer"><option>ByLayer</option></Pick><Arrow w={12} h={7} /></Combo>
          </Col>
        </RibbonPanel>
        <RibbonPanel w={104} title="Groups">
          <BigTool w={63} icon="group" label="Group" />
          <Col>
            <SideTool $w={36} aria-label="Ungroup">{icons.ungroup}</SideTool>
            <SideTool $w={36} aria-label="Group edit">{icons.groupEdit}</SideTool>
            <SideTool $w={36} $on aria-label="Group selection">{icons.groupSel}</SideTool>
          </Col>
        </RibbonPanel>
        <RibbonPanel w={147} title="Utilities">
          <BigTool w={108} icon="ruler" label="Measure" arrow />
          <ToolCol ml={4} items={[["quick"], ["selAll"], ["calc"]]} />
        </RibbonPanel>
        <RibbonPanel w={136} title="Clipboard" plain>
          <BigTool w={78} icon="paste" label="Paste" arrow />
          <ToolCol ml={7} items={[["cut", "", 1], ["copyClip", "", 1]]} />
        </RibbonPanel>
        <RibbonPanel title="View" launcher start>
          <BigTool w={94} icon="base" label="Base" arrow />
        </RibbonPanel>
      </Ribbon>

      <DocTabs>
        <Slash />
        <DocTab $pl={13} $pr={10}>Start</DocTab>
        <DocTab $on $pl={25} $pr={17}>solidos*<Svg s={13}><path d="M1 1L12 12M12 1L1 12" stroke="#a9adb3" strokeWidth="2.600" /></Svg></DocTab>
        <DocTab $pl={13} $pr={15} aria-label="New tab"><Svg s={18}><path d="M9 0V18M0 9H18" stroke={G} strokeWidth="3" /></Svg></DocTab>
        <Slash />
      </DocTabs>
      <Strip />

      <Work>
        <Dock>
          <DockEdge />
          <DockBar>Layer Properties Manager</DockBar>
          <DockEdge />
        </Dock>
        <Canvas>
          <ViewLabel><button>[−]</button><button>[Custom View]</button><button>[X-Ray]</button></ViewLabel>
          <Pinned $top={279} $left={898}><Model /></Pinned>
          <Pinned $top={7} $right={14}>
            <Row $gap={12}>
              <IconButton $w={18} aria-label="Minimize view"><Svg w={16} h={16}><rect x="1" y="11" width="14" height="4" fill="#eee" /></Svg></IconButton>
              <IconButton $w={18} aria-label="Restore view"><Svg w={16} h={16}><path d="M5 1H15V11H12V4H5Z" fill="#ddd" /><rect x="2.500" y="5.500" width="9" height="9" stroke="#eee" strokeWidth="3" /></Svg></IconButton>
              <IconButton $w={18} aria-label="Close view"><Svg w={16} h={16}><path d="M2 2L14 14M14 2L2 14" stroke="#eee" strokeWidth="4" /></Svg></IconButton>
            </Row>
          </Pinned>
          <Pinned $top={89} $right={5}><ViewCube /></Pinned>
          <Pinned $top={286} $right={76}>
            <ViewName aria-label="Coordinate system" defaultValue="Unnamed"><option>Unnamed</option></ViewName>
          </Pinned>
          <Pinned $top={296} $right={82}><Arrow w={12} h={6} fill="#b8bac6" /></Pinned>
          <Pinned $top={345} $right={6}>
            <NavBar>
              <NavEnd aria-label="Close navigation bar" />
              <NavItem $h={57} $mt={9} aria-label="Steering wheel">{navIcons.wheel}<Arrow fill={n1} /></NavItem>
              <NavRule />
              <NavItem $h={35} $mt={6} aria-label="Pan">{navIcons.hand}</NavItem>
              <NavItem $h={51} $mt={7} aria-label="Zoom">{navIcons.zoom}<Arrow fill={n1} /></NavItem>
              <NavItem $h={56} $mt={6} aria-label="Orbit">{navIcons.orbit}<Arrow fill={n1} /></NavItem>
              <NavRule />
              <NavItem $h={36} $mt={6} aria-label="Motion">{navIcons.motion}</NavItem>
              <Grow />
              <NavEnd aria-label="Navigation bar options" />
            </NavBar>
          </Pinned>
          <Command>
            <Grip>
              <Dotted />
              <IconButton $h={24} aria-label="Close command line"><Svg s={14}><path d="M1 1L13 13M13 1L1 13" stroke="#bfc2c6" strokeWidth="2.600" /></Svg></IconButton>
              <IconButton aria-label="Customize command line"><Svg s={24}><path d="M3 21L14 10" stroke="#bfc2c6" strokeWidth="4" strokeLinecap="round" /><path d="M13 7Q13 1 19 1L17 6L20 8L24 6Q24 12 18 12L14 12Z" fill="#bfc2c6" /></Svg></IconButton>
            </Grip>
            <CommandMain>
              <History>{Array.from({ length: 6 }, (_, i) => <li key={i}>Command:</li>)}</History>
              <Prompt>
                <Svg w={24} h={18}><rect x=".7" y=".7" width="22.600" height="16.600" stroke="#58595b" strokeWidth="1.300" /><path d="M1 1H23V5H1Z" fill="#58595b" /><path d="M2 7L6 10L2 13M7 13.500H13" stroke="#58595b" strokeWidth="1.200" /></Svg>
                <Arrow w={11} h={6} fill="#58595b" />
                <PromptInput aria-label="Command" placeholder="Type a command" />
                <Svg w={12} h={7}><path d="M0 7H12L6 0Z" fill="#58595b" /></Svg>
              </Prompt>
            </CommandMain>
          </Command>
        </Canvas>
      </Work>
      <Strip />

      <LayoutTabs>
        <DocTab $on $pl={26} $pr={26}>Model</DocTab>
        <DocTab $pl={11} $pr={13}>a3</DocTab>
        <Slash />
        <DocTab $pl={14} $pr={15} aria-label="New layout"><Svg s={18}><path d="M9 0V18M0 9H18" stroke={G} strokeWidth="3" /></Svg></DocTab>
        <Slash />
      </LayoutTabs>
      <Status>
        <StatusFill />
        <StatusGroup><StatusButton $w={72} $strong>MODEL</StatusButton></StatusGroup>
        <StatusGroup>
          <StatusButton aria-label="Grid">{icons.grid}</StatusButton><StatusButton aria-label="Snap">{icons.dots}</StatusButton>
          <StatusButton $w={24} aria-label="Snap menu"><Arrow w={12} h={8} /></StatusButton>
        </StatusGroup>
        <StatusGroup $mr={2}><StatusButton aria-label="Dynamic input">{icons.dyn}</StatusButton></StatusGroup>
        <StatusGroup $mr={2}>
          <StatusButton aria-label="Ortho">{icons.ortho}</StatusButton><StatusButton aria-label="Polar">{icons.polar}</StatusButton>
          <StatusButton $w={24} aria-label="Polar menu"><Arrow w={12} h={8} /></StatusButton>
          <StatusButton aria-label="Isoplane">{icons.iso}</StatusButton><StatusButton $w={24} aria-label="Isoplane menu"><Arrow w={12} h={8} /></StatusButton>
        </StatusGroup>
        <StatusGroup>
          <StatusButton $on $w={35} aria-label="Tracking">{icons.track}</StatusButton><StatusRule />
          <StatusButton $on $w={34} aria-label="Object snap">{icons.osnap}</StatusButton>
          <StatusButton $w={24} aria-label="Object snap menu"><Arrow w={12} h={8} /></StatusButton>
        </StatusGroup>
        <StatusGroup>
          <StatusButton $on $w={35} aria-label="Annotation visibility">{icons.annoVis}</StatusButton>
          <StatusButton aria-label="Auto scale">{icons.annoAuto}</StatusButton><StatusButton aria-label="Annotation scale">{icons.anno}</StatusButton>
          <StatusButton $w={51}><Row $gap={6}>1:1<Arrow w={12} h={8} /></Row></StatusButton>
        </StatusGroup>
        <StatusGroup $mr={2}>
          <StatusButton aria-label="Workspace">{icons.gear}</StatusButton><StatusButton $w={24} aria-label="Workspace menu"><Arrow w={12} h={8} /></StatusButton>
        </StatusGroup>
        <StatusGroup><StatusButton aria-label="Annotation monitor">{icons.plus}</StatusButton></StatusGroup>
        <StatusGroup $mr={4}><StatusButton aria-label="Isolate objects">{icons.shapes}</StatusButton></StatusGroup>
        <StatusGroup $mr={4}>
          <StatusButton $w={44} aria-label="Drawing status">{icons.sheetSet}</StatusButton><StatusButton $w={40} aria-label="Drawing history">{icons.history}</StatusButton>
        </StatusGroup>
        <StatusGroup $mr={0}>
          <StatusButton aria-label="Clean screen">{icons.clean}</StatusButton><StatusButton aria-label="Customization">{icons.menu}</StatusButton>
        </StatusGroup>
      </Status>

      <Balloon>
        <BalloonHead>
          <Svg><circle cx="12" cy="12" r="11" fill="#2449b8" stroke="#a8adb8" strokeWidth="1.500" /><ellipse cx="12" cy="7" rx="8" ry="5" fill="#5f86e0" fillOpacity=".7" /><path d="M12 10V19" stroke="#fff" strokeWidth="3" /><circle cx="12" cy="6.500" r="1.800" fill="#fff" /></Svg>
          <BalloonTitle>View Drawing History</BalloonTitle>
          <BalloonClose aria-label="Close"><Svg s={12}><path d="M0 0L12 12M12 0L0 12" stroke="#000" strokeWidth="1.800" /></Svg></BalloonClose>
        </BalloonHead>
        <BalloonText>You can view and compare previous versions in the<br />Drawing History palette by signing into OneDrive.</BalloonText>
        <Anchor href="#signin">Sign in to OneDrive</Anchor>
        <Tail><Svg w={34} h={32}><path d="M0 0L32 30L28 0Z" fill="#ffffe1" /><path d="M0 1L32 30L29 1" stroke="#000" strokeWidth="1.500" /></Svg></Tail>
      </Balloon>
    </Shell>
  );
}
